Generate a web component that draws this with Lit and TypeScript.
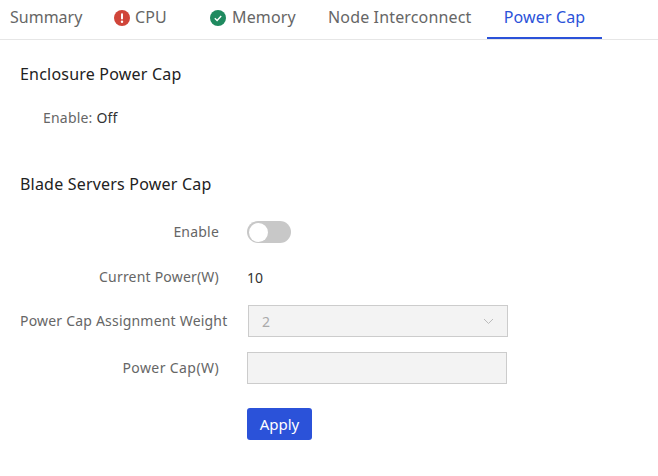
import { LitElement, html, css } from "lit";
import { customElement } from "lit/decorators.js";

@customElement("app-root")
export class AppRoot extends LitElement {
  static styles = css`
    :host { display: block; width: 658px; height: 476px; background: #fff; overflow: hidden;
      font-family: "Noto Sans", "Open Sans", sans-serif; font-size: 14px; letter-spacing: 0.2px; color: #666; }
    .tabs { display: flex; height: 39px; border-bottom: 1px solid #e6e6e6; padding-left: 10px; box-sizing: content-box; }
    .tab { display: flex; align-items: center; font-size: 16px; letter-spacing: 0.15px; color: #666; height: 39px; box-sizing: border-box; padding-bottom: 6px; }
    .summary { width: 104px; letter-spacing: 0; }
    .cpu { width: 96px; }
    .memory { width: 118px; }
    .node { width: 159px; }
    .power { width: 115px; justify-content: center; color: #2b52d9; border-bottom: 2px solid #2b52d9; padding-bottom: 4px; }
    .tab svg { width: 16px; height: 16px; margin-right: 5px; flex: none; position: relative; top: 1px; }
    .memory svg { margin-right: 6px; }
    .content { padding: 23px 20px 0; }
    h2 { margin: 0; font-size: 16px; line-height: 22px; font-weight: 400; letter-spacing: 0.2px; color: #222; }
    .enc { display: flex; margin: 22px 0 0 23px; line-height: 22px; font-size: 14px; }
    .enc span { color: #333; }
    .second { margin-top: 44px; }
    .form { margin-top: 21px; }
    .field { display: grid; grid-template-columns: 199px 1fr; column-gap: 28px; height: 32px; align-items: center; }
    .current { margin-top: 13px; }
    .weight { margin-top: 12px; }
    .cap { margin-top: 15px; }
    .action { margin-top: 24px; }
    .label { text-align: right; white-space: nowrap; line-height: 22px; }
    .weight .label { margin-right: -8px; }
    .cap .label { letter-spacing: 0.4px; }
    .value { color: #333; letter-spacing: 0; }
    .switch { width: 44px; height: 22px; border-radius: 11px; background: #c8c8c8; display: flex; align-items: center; padding-left: 2px; box-sizing: border-box; }
    .knob { width: 19px; height: 19px; border-radius: 50%; background: #fff; }
    .select { width: 260px; height: 32px; box-sizing: border-box; border: 1px solid #ccc; background: #f3f3f3; color: #aaa;
      display: flex; align-items: center; justify-content: space-between; padding: 0 13px; margin-left: 1px; }
    .select svg { width: 11px; height: 7px; }
    .input { width: 260px; height: 32px; box-sizing: border-box; border: 1px solid #ccc; background: #f3f3f3; }
    .apply { width: 65px; height: 32px; border: 0; border-radius: 3px; background: #2b52d9; color: #fff; font: inherit; font-size: 15px; padding: 0; display: block; }
  `;

  render() {
    return html`
      <div class="tabs">
        <div class="tab summary">Summary</div>
        <div class="tab cpu">
          <svg viewBox="0 0 16 16"><circle cx="8" cy="8" r="8" fill="#d0453a"/><rect x="7" y="3.2" width="2" height="6.4" rx="1" fill="#fff"/><circle cx="8" cy="11.8" r="1.2" fill="#fff"/></svg>CPU
        </div>
        <div class="tab memory">
          <svg viewBox="0 0 16 16"><circle cx="8" cy="8" r="8" fill="#1f8a5f"/><path d="M4.8 8.2 7.1 10.4 11.2 6" fill="none" stroke="#fff" stroke-width="1.4"/></svg>Memory
        </div>
        <div class="tab node">Node Interconnect</div>
        <div class="tab power">Power Cap</div>
      </div>
      <div class="content">
        <h2>Enclosure Power Cap</h2>
        <div class="enc">Enable:&nbsp;<span>Off</span></div>
        <h2 class="second">Blade Servers Power Cap</h2>
        <div class="form">
          <div class="field">
            <div class="label">Enable</div>
            <div class="switch"><div class="knob"></div></div>
          </div>
          <div class="field current">
            <div class="label">Current Power(W)</div>
            <div class="value">10</div>
          </div>
          <div class="field weight">
            <div class="label">Power Cap Assignment Weight</div>
            <div class="select">2<svg viewBox="0 0 11 7"><path d="M1 1 5.5 5.5 10 1" fill="none" stroke="#bbb"/></svg></div>
          </div>
          <div class="field cap">
            <div class="label">Power Cap(W)</div>
            <div class="input"></div>
          </div>
          <div class="field action">
            <div></div>
            <button class="apply">Apply</button>
          </div>
        </div>
      </div>
    `;
  }
}
